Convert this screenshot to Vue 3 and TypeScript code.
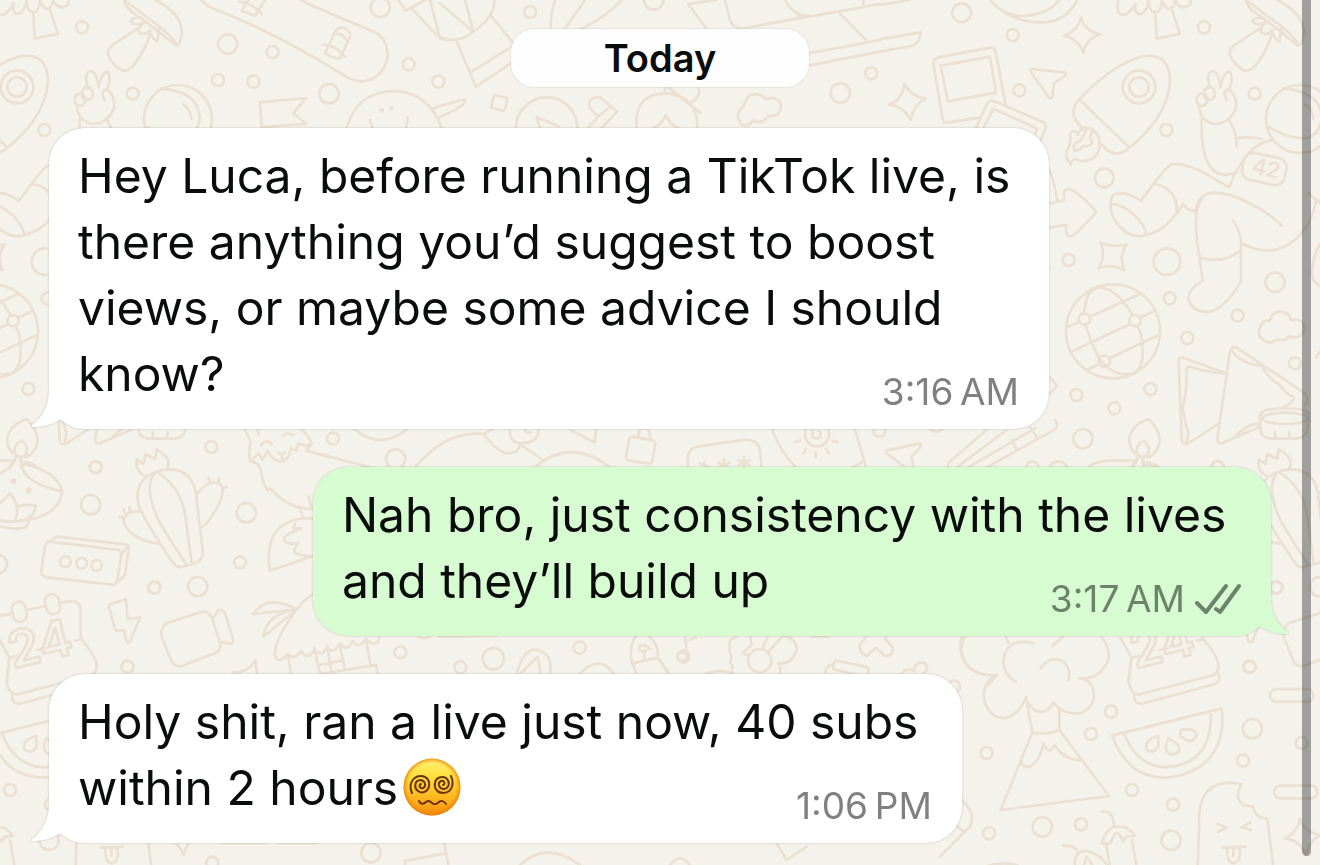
<script setup lang="ts">
interface Message {
  id: number
  side: 'in' | 'out'
  size: 'large' | 'medium' | 'small'
  lines: string[]
  time: string
  dizzy?: boolean
}

const messages: Message[] = [
  {
    id: 1,
    side: 'in',
    size: 'large',
    lines: [
      'Hey Luca, before running a TikTok live, is',
      'there anything you’d suggest to boost',
      'views, or maybe some advice I should',
      'know?',
    ],
    time: '3:16\u2009AM',
  },
  {
    id: 2,
    side: 'out',
    size: 'medium',
    lines: ['Nah bro, just consistency with the lives', 'and they’ll build up'],
    time: '3:17\u2009AM',
  },
  {
    id: 3,
    side: 'in',
    size: 'small',
    lines: ['Holy shit, ran a live just now, 40 subs', 'within 2 hours'],
    time: '1:06\u2009PM',
    dizzy: true,
  },
]

const third = 'scale(.33333)'
type Dot = [number, number, number]

const topRight: Dot[] = [[245, 38, 28], [398, 105, 18], [418, 271, 18], [859, 390, 18], [972, 82, 18], [673, 534, 28], [1124, 281, 18], [777, 261, 49], [777, 261, 29], [1260, 357, 102]]
const midRight: Dot[] = [[86, 180, 18], [381, 185, 40], [389, 295, 18], [705, 247, 29], [593, 347, 18], [442, 414, 18], [765, 490, 18], [331, 567, 18], [109, 585, 18], [223, 625, 18], [129, 716, 29], [55, 812, 28], [533, 802, 18], [219, 394, 141], [133, 357, 17], [285, 362, 17], [193, 484, 17]]
const midLeft: Dot[] = [[287, 141, 18], [272, 254, 29], [634, 81, 18], [739, 278, 29], [720, 427, 18], [462, 503, 18], [593, 500, 29], [383, 741, 18], [-8, 433, 29], [196, 425, 16], [245, 430, 16], [290, 436, 16]]
const lowRight: Dot[] = [[513, 395, 18], [453, 462, 18], [576, 630, 18], [699, 674, 18], [693, 781, 29], [937, 446, 29], [909, 542, 18], [928, 260, 18], [1085, 489, 18], [1010, 22, 18], [307, 741, 29], [423, 733, 18], [140, 519, 18], [147, 760, 18], [42, 320, 18]]
const topLeft: Dot[] = [[683, 132, 29], [818, 156, 18], [654, 240, 18], [760, 245, 18], [987, 281, 29], [1226, 193, 18], [1141, 22, 29], [1315, 245, 18]]
const topMid: Dot[] = [[270, 36, 18], [641, 0, 29], [1201, 279, 29], [1294, 220, 18], [320, 384, 92]]
</script>

<template>
  <main class="chat">
    <svg class="wallpaper" aria-hidden="true">
      <g id="doodles">
        <g :transform="`translate(880 0) ${third}`">
          <circle v-for="(d, i) in topRight" :key="i" :cx="d[0]" :cy="d[1]" :r="d[2]" />
          <path d="M330 0Q380 58 450 46Q510 38 538 0M330 0Q400 75 500 66Q560 60 592 0M0 15L90 0M0 118L122 97Q122 130 95 138L0 155" />
          <path d="M603 52Q612 92 662 103Q618 115 610 160Q595 115 552 108Q595 92 603 52ZM73 250Q90 290 137 295Q100 315 92 360Q72 320 27 313Q68 300 73 250Z" />
          <path d="M376 312L347 154Q344 140 330 143L172 173Q158 178 160 190L188 358Q190 371 204 368L300 352M182 197L330 170L348 278L203 304Z" />
          <path d="M288 384L322 310Q330 298 344 304L488 366Q500 372 497 384L482 420M310 384L340 326L472 386L465 402" />
          <path d="M452 207L555 217Q562 222 554 228L522 250L517 292Q512 300 506 292L452 215Z" />
          <path d="M598 298C680 210 770 160 820 168C860 175 875 215 868 262C858 330 810 395 748 443ZM598 298C570 330 578 358 604 380M748 443Q715 475 680 448L660 430" />
          <path d="M602 384Q640 376 655 410Q668 450 640 475Q610 492 590 478Q575 475 572 494Q550 470 564 445Q575 430 570 402Q582 384 594 404Q600 384 620 388Q612 404 600 424Q575 428 584 452Q600 452 608 438Q640 440 636 420Q622 414 640 392" />
          <path d="M715 0Q705 50 735 44Q755 35 767 10Q760 40 780 42Q800 38 806 0Q808 35 825 38Q845 35 846 0Q855 28 870 26Q885 20 885 0Q895 22 912 22Q935 20 932 0M826 38L830 115L900 102L876 30" />
          <path d="M1145 82L1068 132Q1045 148 1050 165Q1065 200 1095 212Q1115 215 1135 185Q1165 145 1178 92M1098 0Q1100 25 1150 55L1255 137Q1268 135 1272 100Q1272 40 1192 0M1098 0L1195 72Q1250 115 1255 137M1150 52Q1112 55 1118 65Q1130 78 1150 70M1160 65Q1135 85 1145 98Q1162 108 1175 92Q1185 122 1198 124L1204 78" />
          <path d="M990 265Q975 215 1000 213Q1015 215 1022 262Q1030 215 1050 215Q1060 230 1048 270Q1072 285 1068 325Q1050 370 1005 372Q960 365 957 318M1040 300Q1025 275 1045 268M965 358Q960 520 1035 525L1060 520M1047 360Q1072 400 1070 440" />
          <ellipse cx="988" cy="281" rx="17" ry="19" /><ellipse cx="966" cy="299" rx="16" ry="19" />
          <path d="M1210 265Q1320 275 1325 350Q1320 415 1265 415Q1210 410 1165 380M1275 313Q1298 328 1300 355M1070 415Q1110 408 1145 418M1175 420Q1100 430 1047 562L1000 535Q930 490 880 492Q865 492 822 550L782 603Q740 570 705 583Q690 590 692 620M822 552Q885 560 892 630M892 640L910 612Q925 635 945 632M947 640Q950 582 1000 578Q1050 580 1100 605" />
          <rect x="1088" y="466" width="130" height="82" rx="28" transform="rotate(12 1153 507)" />
          <text class="solid" x="1114" y="526" font-size="66" transform="rotate(14 1150 510)">42</text>
          <path d="M505 612L552 600L552 575Q565 560 580 572L618 602M505 505Q522 535 532 604M1285 580L1320 610" />
        </g>
        <g :transform="`translate(1040 200) ${third}`">
          <circle v-for="(d, i) in midRight" :key="i" :cx="d[0]" :cy="d[1]" :r="d[2]" />
          <path d="M25 83L78 75L78 95Q85 120 105 103L165 42Q170 33 162 26L135 0M212 12Q210 60 260 98Q290 115 318 105Q370 95 410 40L408 0M212 12Q245 12 280 42Q316 75 318 105" />
          <path d="M485 0Q455 30 478 170L488 242Q440 270 446 300Q460 340 510 335Q550 330 603 245L603 130Q600 90 580 62M478 172Q550 195 603 150M605 130Q700 180 770 115Q815 70 830 0M605 0Q680 30 725 77M840 130Q808 190 820 240L840 260M840 455L828 473" />
          <path d="M182 127Q220 145 260 133Q235 170 253 211Q215 190 176 205Q198 170 182 127Z" />
          <path d="M133 340Q135 265 180 262Q230 265 278 345M137 375Q170 480 200 500Q230 525 265 523Q310 520 308 450Q308 400 292 378M83 380L118 365M150 350L298 283M95 455L270 372M302 352L345 333M140 510L178 492M208 475L357 405" />
          <path d="M690 362Q695 335 722 335Q750 338 752 360Q793 352 793 388Q785 420 745 410Q735 425 712 418Q690 435 670 420Q650 405 660 380Q668 360 690 362Z" />
          <path d="M558 520L430 473Q415 470 416 485L425 720Q428 738 445 730L535 672M555 520Q500 518 450 500Q437 498 440 520Q440 590 428 620Q430 650 445 700L440 730M795 615Q812 600 795 580L590 443Q575 435 570 455L532 715Q530 735 550 728L660 680M575 450Q600 490 665 498Q690 540 720 555Q740 585 760 590Q768 602 730 622M580 715Q620 670 660 670" />
          <path d="M660 655Q655 630 700 627Q770 620 800 635Q808 640 806 660L802 690Q795 715 770 716L690 716Q662 710 662 690ZM705 697V712M748 697V712" />
          <ellipse cx="735" cy="655" rx="68" ry="17" />
          <path d="M325 657Q370 700 355 740Q340 770 322 772M295 765Q265 750 268 715Q275 675 325 657M312 722Q335 745 322 765Q305 780 290 760Q285 735 312 722M148 800Q170 775 285 783M275 802L295 770M310 770L310 802M322 785L350 795M25 530Q36 535 50 558L25 585M25 208h3" />
        </g>
        <g :transform="`translate(1122 420) ${third}`">
          <circle v-for="(d, i) in midLeft" :key="i" :cx="d[0]" :cy="d[1]" :r="d[2]" />
          <path d="M470 155Q400 180 415 250Q425 290 520 430Q530 445 550 440L590 428Q612 415 608 390L590 240Q585 150 510 148Q485 148 470 155ZM465 158Q430 200 475 300Q500 345 560 435M470 155Q540 200 555 280L575 430M590 222Q630 175 660 192Q680 210 650 265Q625 310 605 322M630 185l-4-11M655 186l3-10M668 205l11-4M425 275Q380 270 370 300Q380 355 478 372M374 277l-4-10M388 272l2-12M368 292l-10-2M435 168Q405 155 410 118L430 132L436 103L466 117L470 88Q520 115 500 148" />
          <path d="M62 110V130Q170 150 187 215Q175 300 30 305L0 302M65 125Q60 185 187 215M0 160Q45 140 50 105M0 250L30 220Q65 260 45 300M48 262Q80 248 108 258Q100 300 60 302M0 320Q80 336 85 308" />
          <circle class="dot" cx="40" cy="184" r="9" /><circle class="dot" cx="86" cy="212" r="9" />
          <path d="M150 365L355 390Q366 395 364 405L352 480Q348 497 335 494L140 472Q122 468 124 455L135 378Q138 365 150 365ZM142 366L172 350L375 373Q388 376 386 388L375 465L345 494M364 400L386 378" />
          <path d="M0 587L38 580M80 570L138 558M180 548L215 543Q242 545 242 570L242 655Q290 710 290 740L285 762M-4 655L28 712L20 790M28 714L50 708M112 690L138 684M225 662L242 658" />
          <rect x="37" y="545" width="42" height="60" rx="20" transform="rotate(-12 58 575)" />
          <rect x="137" y="523" width="42" height="60" rx="20" transform="rotate(-12 158 553)" />
          <text class="outline" x="40" y="746" font-size="152" transform="rotate(-14 40 750)">24</text>
          <path d="M325 555L378 537L383 597L420 592L390 665Q384 672 378 660L372 630L347 632Z" />
          <path d="M500 610L600 577Q625 570 637 595L660 670Q665 690 645 700L545 738Q525 742 515 725L485 650Q480 622 500 610ZM638 595L655 572Q668 565 675 580L700 660Q698 675 685 670L662 665" />
          <path d="M732 25L752 65Q745 90 750 125Q775 125 782 150Q790 200 805 212L812 205Q860 265 938 268M752 125L775 100L788 118L803 92Q820 125 845 125Q870 115 872 85L890 92L895 70L920 78L935 70Q925 45 900 25M783 75Q800 55 815 72M848 48Q862 35 880 45M835 98Q845 108 855 97M846 104V115M772 25L776 45M935 70L920 92L990 112M900 270L910 292M925 230L935 262" />
          <path d="M810 452Q795 350 850 315Q890 290 938 296M810 452L940 408M885 310L880 325L905 325Q850 345 852 360Q860 375 895 370Q880 385 885 400Q915 410 940 408" />
          <path d="M760 582Q800 520 890 568ZM890 568Q800 580 790 650ZM890 568Q915 535 938 525M890 568Q810 680 828 715Q845 730 863 700Q880 725 903 693Q925 725 943 688Q965 715 980 683M863 700L873 765M697 758Q745 760 767 720L770 762" />
        </g>
        <g :transform="`translate(940 580) ${third}`">
          <circle v-for="(d, i) in lowRight" :key="i" :cx="d[0]" :cy="d[1]" :r="d[2]" />
          <path d="M574 232L566 300Q570 345 600 343L820 285Q842 275 832 240M583 345Q580 375 610 370L825 312Q840 305 838 285" />
          <path d="M517 467L845 385Q860 500 780 560Q680 620 590 570Q540 535 517 467ZM552 460Q590 560 680 562Q820 550 812 395M655 467Q610 480 620 508Q640 525 655 500ZM685 475Q665 520 700 523Q730 515 710 490ZM722 450Q760 440 770 465Q755 500 722 468Z" />
          <path d="M65 165Q45 270 140 285L170 285Q120 310 135 370Q155 420 200 413Q240 400 258 352Q275 400 310 395Q330 390 340 368Q370 405 420 400Q470 380 460 330Q450 295 418 295Q480 300 505 240Q512 200 480 165M282 190Q200 170 190 240Q190 285 227 305M302 265Q330 225 370 245Q395 265 385 302M195 165L205 188M338 198L370 168M258 352L277 458Q320 465 358 450V385M277 458L182 690L507 648L358 450M243 540Q245 565 270 560Q300 545 310 490Q325 530 345 495Q370 540 425 540" />
          <rect x="990" y="327" width="130" height="38" rx="19" /><rect x="1002" y="617" width="130" height="38" rx="19" />
          <path d="M773 860L778 700Q785 610 870 608L905 612Q880 650 910 675L940 680Q945 715 982 716L1000 860M833 732L860 743L835 755M930 728L905 742L932 750M848 803L915 800M862 805Q860 850 882 850Q905 845 898 802M880 808V828" />
          <path d="M1080 715Q1090 755 1140 765Q1105 785 1098 825Q1080 780 1035 775Q1075 755 1080 715Z" />
          <path d="M487 695Q520 690 522 740M485 790Q500 735 540 740Q565 740 585 768L560 770L550 783L535 760L525 760L510 790ZM498 790L510 860M576 780L590 860M370 797Q410 795 415 820M405 860Q400 815 440 812Q485 825 505 860M430 860L440 830L460 860M65 660Q110 700 90 740L0 830M50 738L72 755M135 860Q200 840 240 860" />
        </g>
      </g>
      <use href="#doodles" x="-1122" />
      <g :transform="third">
        <circle v-for="(d, i) in topLeft" :key="i" :cx="d[0]" :cy="d[1]" :r="d[2]" />
        <path d="M605 0Q620 20 650 30Q830 100 1030 225Q1060 245 1090 244Q1150 235 1163 170Q1165 110 1110 90Q1010 50 900 0M975 160L1005 95Q1020 75 1040 88Q1055 98 1048 115L1020 175Q1010 178 975 160M1005 102Q1030 100 1040 122M968 135Q1000 130 1035 170M745 0L725 32L765 48L795 0M718 5Q760 10 785 42" />
        <path d="M780 307L918 294L880 340L918 372L785 381ZM1040 384Q1070 275 1185 273Q1290 280 1325 384M1110 360Q1112 375 1118 384M1222 352Q1222 370 1218 384M1300 325L1320 318L1395 298Q1405 315 1320 350M1195 0L1217 32L1275 0M1235 25L1300 95Q1315 112 1340 118" />
        <circle class="dot" cx="1145" cy="331" r="7" /><circle class="dot" cx="1174" cy="325" r="7" />
      </g>
      <g :transform="`translate(440 0) ${third}`">
        <circle v-for="(d, i) in topMid" :key="i" :cx="d[0]" :cy="d[1]" :r="d[2]" />
        <path d="M-30 0L0 115M0 10L100 95L75 0M0 115Q60 130 100 95Q165 50 163 0M155 50L220 130M50 125L108 260L220 185M95 215L215 140M345 0Q325 70 335 95Q345 120 365 110Q480 70 545 0M435 0L355 115" />
        <rect x="157" y="289" width="42" height="40" rx="6" transform="rotate(14 178 309)" />
        <path d="M300 384L290 352L355 378M450 325Q440 290 480 292L532 335L485 384M450 325L475 350L512 318M445 384L475 350M590 384Q580 280 680 280Q775 290 772 384M640 384Q665 375 678 345Q690 375 715 384M675 260V280M682 260L780 338M775 260Q785 290 755 305" />
        <path d="M912 318Q920 280 950 283Q970 285 978 298Q1020 285 1023 320Q1020 352 985 348Q965 375 940 362Q925 380 905 375Q880 340 912 318M745 12L830 0M745 12L800 87M855 0L870 60Q880 90 915 84L1320 12M1035 0Q1060 50 1110 47M1075 40V55M1270 0V15M1200 40L1280 122M1105 160L1320 120M1105 197L1320 155" />
      </g>
      <g :transform="`translate(320 420) ${third}`">
        <circle cx="39" cy="56" r="18" /><circle cx="227" cy="117" r="29" />
        <path d="M100 25Q180 95 265 25M0 102L150 142M285 142Q380 30 490 42Q540 105 570 100Q600 95 600 72M490 42L525 25M600 72L668 120M570 25Q565 65 600 70Q660 70 655 25M615 30Q620 42 632 36M645 142Q750 50 870 142M752 30L825 68L828 25M955 52Q955 20 975 25Q992 30 990 60M1105 142Q1095 90 1130 80L1270 60Q1312 56 1320 90L1325 142M1153 125v25M1138 130l30 12M1212 118v34M1195 128l34 16M1195 144l34-16M1272 110v34M1255 120l34 16M1255 136l34-16" />
        <rect x="922" y="55" width="80" height="72" rx="12" transform="rotate(10 962 91)" />
      </g>
      <g :transform="`translate(740 420) ${third}`">
        <circle cx="231" cy="43" r="36" /><circle cx="419" cy="33" r="18" /><circle cx="877" cy="142" r="18" />
        <path d="M95 25Q120 95 168 142M218 30Q212 58 235 55Q250 40 235 32M165 67l14-5M190 100l8-14M227 97v14M268 100l-10-14M292 67l-14-5M343 25Q365 90 378 142M340 142L372 122M565 25Q590 45 612 25M437 92L540 70Q547 75 535 88L515 110L520 142M437 98L495 142M622 142Q625 125 635 120L745 25M650 142L800 30M685 142L885 25M740 142L945 28Q958 15 945 0M815 60L830 90M870 22L890 50" />
      </g>
      <g :transform="`translate(240 625) ${third}`">
        <circle cx="481" cy="82" r="18" /><circle cx="661" cy="127" r="18" /><circle cx="760" cy="101" r="32" /><circle cx="1019" cy="68" r="18" /><circle cx="1330" cy="95" r="18" />
        <path d="M262 68Q280 90 300 55Q320 85 338 48Q360 75 378 42Q400 65 415 50L418 32M222 68L240 147M262 62L275 147M300 62L315 137M378 42L392 125M235 120L308 107M240 147L408 120L413 147M535 35Q552 45 570 35M597 35L770 32M830 147Q850 70 890 75Q940 85 930 147M840 147L893 95L903 147M1018 147Q1080 85 1122 147M1190 32Q1165 60 1175 110L1190 147M1178 115L1252 98L1290 147M1225 32Q1260 60 1252 98M1232 72Q1200 50 1197 70Q1200 85 1218 75Q1210 90 1215 108" />
      </g>
      <g :transform="`translate(660 625) ${third}`">
        <circle cx="299" cy="107" r="35" /><ellipse cx="67" cy="95" rx="14" ry="12" />
        <path d="M75 32L82 95M80 48L107 38M0 105L25 147M135 147Q180 130 220 145M235 32L210 45Q205 80 215 95Q205 110 218 125L215 147M305 72L325 32M325 80L370 32Q410 40 410 75Q395 120 355 115Q365 130 358 147M270 32L275 60L248 85L270 92M455 35H505M598 62L620 32M598 62Q600 85 620 93L647 68L675 93Q705 90 697 65L675 42L680 32M495 147Q495 120 520 118M725 147Q740 125 765 140M760 135Q770 105 795 115Q810 130 790 147M915 32Q890 80 925 125Q960 155 1010 150L985 180" />
        <rect x="520" y="116" width="105" height="28" rx="8" transform="rotate(12 572 130)" />
      </g>
      <g :transform="`translate(0 660) ${third}`">
        <circle cx="1113" cy="578" r="29" /><circle cx="637" cy="608" r="18" />
        <path d="M1215 615V603L1335 580M1333 548L1345 615M670 549H795M830 549H950M1560 615Q1640 540 1740 615M2010 615Q2040 575 2070 615M2330 550L2360 600L2420 560" />
      </g>
    </svg>

    <h1 class="day">Today</h1>

    <article
      v-for="message in messages"
      :key="message.id"
      class="bubble"
      :class="[message.side, message.size]"
    >
      <svg class="tail" viewBox="0 0 50 60" aria-hidden="true">
        <path d="M18 0V20Q18 44 1 56Q0 58 3 58Q17 58 30 50Q38 58 50 60V0Z" />
      </svg>
      <p class="text">
        <span v-for="(line, i) in message.lines" :key="line" class="line">{{ line
          }}<svg v-if="message.dizzy && i === message.lines.length - 1" class="emoji" viewBox="0 0 58 58" role="img" aria-label="Face with spiral eyes">
            <defs>
              <linearGradient id="skin" x1="0" y1="0" x2="0" y2="1">
                <stop offset="0" stop-color="#fff27a" />
                <stop offset=".3" stop-color="#ffdf3c" />
                <stop offset=".75" stop-color="#ffb01a" />
                <stop offset="1" stop-color="#f28a10" />
              </linearGradient>
              <radialGradient id="rim">
                <stop offset=".84" stop-color="#f08a00" stop-opacity="0" />
                <stop offset="1" stop-color="#e87a08" stop-opacity=".75" />
              </radialGradient>
            </defs>
            <circle cx="29" cy="29" r="28.5" fill="url(#skin)" />
            <circle cx="29" cy="29" r="28.5" fill="url(#rim)" />
            <g class="ink">
              <path d="M9 35C5 26 10 18 18 18C24 18 27 23 26 28C25 34 19 36 15 33C11 30 11 23 17 22C22 22 24 28 20 30C17 31 15 27 18 26" />
              <path d="M48 18C52 27 48 35 40 35C34 35 31 30 32 25C33 19 39 18 43 20C47 23 47 30 41 31C36 31 34 25 38 23C41 22 43 26 40 27" />
              <path d="M16 43C18 47 21 46 23 44S27 43 29 45S34 46 36 44S41 43 43 46" />
            </g>
          </svg></span>
      </p>
      <footer class="meta">
        <time>{{ message.time }}</time>
        <svg v-if="message.side === 'out'" class="ticks" viewBox="0 0 46 32" role="img" aria-label="Delivered">
          <path d="M2 20L11 29L31 3M21 26L25 29L44 3" />
        </svg>
      </footer>
    </article>

    <div class="scrollbar" aria-hidden="true"></div>
  </main>
</template>

<style>
html,
body {
  margin: 0;
  background: #f5f2eb;
}
</style>

<style scoped>
.chat {
  position: relative;
  box-sizing: border-box;
  min-height: 100vh;
  padding: 29px 49px 22px;
  display: flex;
  flex-direction: column;
  gap: 38px;
  overflow: hidden;
  color: #0b0c0c;
  background: #f5f2eb;
  font-family: Inter, 'Liberation Sans', sans-serif;
}

.wallpaper {
  position: absolute;
  inset: 0;
  width: 100%;
  height: 100%;
  fill: none;
  stroke: #eae0d3;
  stroke-width: 8;
  stroke-linecap: round;
  stroke-linejoin: round;
}

.dot {
  fill: #eae0d3;
  stroke: none;
}

.solid {
  fill: #eae0d3;
  stroke: none;
  font-weight: 600;
}

.outline {
  font-weight: 600;
}

.day {
  position: relative;
  align-self: center;
  box-sizing: border-box;
  width: 298px;
  margin: 0 0 3px;
  border-radius: 24px;
  background: rgba(255, 254, 255, 0.95);
  box-shadow: 0 0 1px 1px rgba(0, 0, 0, 0.06);
  font-size: 38px;
  font-weight: 600;
  line-height: 58px;
  text-align: center;
}

.bubble {
  position: relative;
  box-sizing: border-box;
  display: grid;
  padding: 15px 30px 22px 29px;
  border-radius: 36px;
  background: #fff;
  filter: drop-shadow(0 0 1px rgba(60, 50, 30, 0.25));
}

.in {
  align-self: flex-start;
}

.out {
  align-self: flex-end;
  background: #d8fcd2;
}

.large {
  width: 82%;
  max-width: 1000px;
}

.medium {
  width: 78.4%;
}

.small {
  width: 74.7%;
}

.tail {
  position: absolute;
  bottom: 0;
  left: -18px;
  width: 50px;
  height: 60px;
  fill: #fff;
}

.out .tail {
  right: -18px;
  left: auto;
  transform: scaleX(-1);
  fill: #d8fcd2;
}

.text,
.meta {
  grid-area: 1 / 1;
  position: relative;
}

.text {
  margin: 0;
  font-size: 48px;
  line-height: 66px;
}

.line {
  display: block;
  height: 66px;
  white-space: nowrap;
}

.emoji {
  width: 58px;
  height: 58px;
  margin-left: 5px;
  vertical-align: -11px;
}

.ink {
  fill: none;
  stroke: #6b3410;
  stroke-width: 2;
  stroke-linecap: round;
}

.meta {
  align-self: end;
  justify-self: end;
  display: flex;
  align-items: center;
  gap: 10px;
  margin-bottom: -6px;
  color: #808080;
  font-size: 37px;
  line-height: 42px;
}

.out .meta {
  color: #6c826a;
}

.ticks {
  width: 46px;
  height: 32px;
  fill: none;
  stroke: currentColor;
  stroke-width: 4;
  stroke-linecap: round;
  stroke-linejoin: round;
}

.scrollbar {
  position: absolute;
  top: 0;
  right: 9px;
  bottom: 9px;
  width: 9px;
  border-radius: 0 0 5px 5px;
  background: rgba(0, 0, 0, 0.34);
}
</style>
